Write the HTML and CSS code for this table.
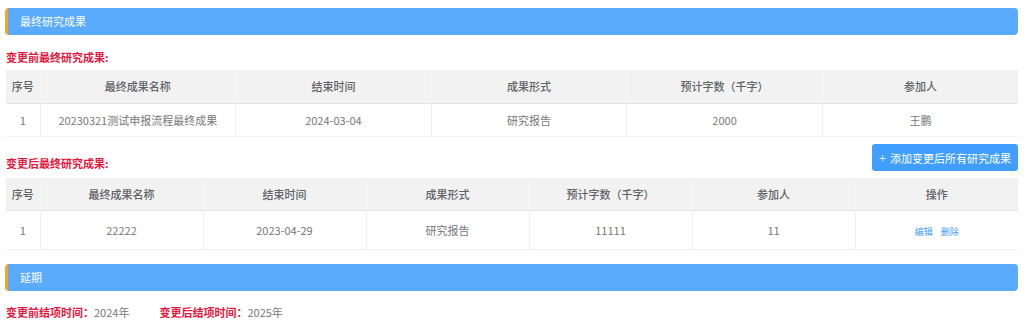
FILE: index.html
```html
<!DOCTYPE html>
<html lang="zh">
<head>
<meta charset="utf-8">
<link rel="stylesheet" href="styles.css">
</head>
<body>
<div class="page">
  <div class="bar">最终研究成果</div>
  <div class="label lbl1">变更前最终研究成果:</div>
  <table class="tbl t1">
    <colgroup><col class="c-no"><col><col><col><col><col></colgroup>
    <thead>
      <tr><th>序号</th><th>最终成果名称</th><th>结束时间</th><th>成果形式</th><th>预计字数（千字）</th><th>参加人</th></tr>
    </thead>
    <tbody>
      <tr><td>1</td><td>20230321测试申报流程最终成果</td><td>2024-03-04</td><td>研究报告</td><td>2000</td><td>王鹏</td></tr>
    </tbody>
  </table>
  <div class="toolbar">
    <div class="label">变更后最终研究成果:</div>
    <button class="btn"><span class="plus">+</span>添加变更后所有研究成果</button>
  </div>
  <table class="tbl t2">
    <colgroup><col class="c-no"><col><col><col><col><col><col></colgroup>
    <thead>
      <tr><th>序号</th><th>最终成果名称</th><th>结束时间</th><th>成果形式</th><th>预计字数（千字）</th><th>参加人</th><th>操作</th></tr>
    </thead>
    <tbody>
      <tr><td>1</td><td>22222</td><td>2023-04-29</td><td>研究报告</td><td>11111</td><td>11</td><td><a class="link">编辑</a><a class="link">删除</a></td></tr>
    </tbody>
  </table>
  <div class="bar bar2">延期</div>
  <div class="info">
    <span class="item"><span class="label-in">变更前结项时间：</span><span class="val">2024年</span></span>
    <span class="item"><span class="label-in">变更后结项时间：</span><span class="val">2025年</span></span>
  </div>
</div>
</body>
</html>
```
FILE: styles.css
```css
* { box-sizing: border-box; }
html, body { margin: 0; padding: 0; background: #fff; }
body {
  font-family: "Noto Sans CJK SC", "Microsoft YaHei", sans-serif;
  font-size: 11px;
  color: #666;
}
.page { padding: 8px 6px 0 6px; width: 1024px; }
.bar {
  margin-left: -1px;
  height: 27px;
  line-height: 27px;
  background: #5aabfd;
  border-left: 3px solid #f5a623;
  border-radius: 4px;
  color: #fff;
  font-size: 11px;
  padding-left: 12px;
}
.label {
  color: #e4173e;
  font-weight: bold;
  font-size: 11px;
  line-height: 20px;
  height: 20px;
}
.lbl1 { margin-top: 12px; }
.tbl {
  width: 100%;
  border-collapse: collapse;
  table-layout: fixed;
  margin-top: 3px;
}
.tbl .c-no { width: 34px; }
.tbl th {
  background: #f2f2f2;
  color: #606266;
  font-weight: 500;
  height: 33px;
  font-size: 11px;
  border-bottom: 1px solid #e4e4e4;
  border-left: 1px solid #f7f7f7;
  text-align: center;
  padding: 0;
}
.tbl td {
  height: 33px;
  text-align: center;
  padding: 0;
  color: #777;
  border-bottom: 1px solid #efefef;
  border-left: 1px solid #f0f0f0;
}
.tbl th:first-child, .tbl td:first-child { border-left: none; }
.t2 { margin-top: 5px; }
.t2 td { height: 39px; }
.toolbar {
  margin-top: 7px;
  height: 29px;
  display: flex;
  justify-content: space-between;
  align-items: flex-end;
}
.btn {
  align-self: flex-start;
  height: 27px;
  width: 146px;
  background: #409eff;
  border: none;
  border-radius: 3px;
  color: #fff;
  font-family: inherit;
  font-size: 11px;
  padding: 0;
}
.plus { font-size: 13px; margin-right: 4px; font-weight: 300; }
.link { color: #409eff; font-size: 9px; margin: 0 4px; }
.bar2 { margin-top: 14px; }
.info { margin-top: 11px; line-height: 20px; display: flex; }
.item { margin-right: 30px; }
.label-in { color: #e4173e; font-weight: bold; }
.val { color: #777; }
```
